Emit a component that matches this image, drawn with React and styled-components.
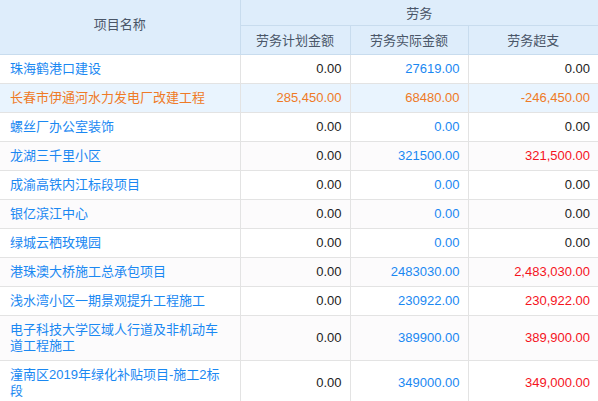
import React from "react";
import styled, { createGlobalStyle } from "styled-components";

const GlobalStyle = createGlobalStyle`
  body {
    margin: 0;
    background: #fff;
    font-family: "Liberation Sans", "Noto Sans CJK SC", sans-serif;
  }
`;

const Table = styled.table`
  width: 598px;
  border-collapse: collapse;
  table-layout: fixed;
  font-size: 13px;
`;

const Th = styled.th`
  background: #deedfb;
  color: #4a5668;
  font-weight: normal;
  text-align: center;
  border: 1px solid #c8dcee;
  border-top: none;
  height: ${(p) => p.h}px;
  padding: 0 0 ${(p) => p.lift || 0}px;
  box-sizing: border-box;
  &:first-child {
    border-left: none;
  }
  &:last-child {
    border-right: none;
  }
`;

const Row = styled.tr`
  background: ${(p) => (p.active ? "#e9f4fe" : p.odd ? "#fcfbfc" : "#ffffff")};
`;

const Td = styled.td`
  border: 1px solid #e3e3e3;
  border-top: none;
  padding: ${(p) => (p.num ? "6px 8px 6px 10px" : "6px 11px 6px 10px")};
  line-height: 16px;
  text-align: ${(p) => (p.num ? "right" : "left")};
  color: ${(p) => p.color};
  vertical-align: middle;
  word-break: break-all;
  &:first-child {
    border-left: none;
  }
  &:last-child {
    border-right: none;
  }
`;

const BLUE = "#1a88f2";
const BLACK = "#222";
const RED = "#f5141e";
const ORANGE = "#ef7a26";

const rows = [
  ["珠海鹤港口建设", "0.00", "27619.00", "0.00"],
  ["长春市伊通河水力发电厂改建工程", "285,450.00", "68480.00", "-246,450.00", true],
  ["螺丝厂办公室装饰", "0.00", "0.00", "0.00"],
  ["龙湖三千里小区", "0.00", "321500.00", "321,500.00"],
  ["成渝高铁内江标段项目", "0.00", "0.00", "0.00"],
  ["银亿滨江中心", "0.00", "0.00", "0.00"],
  ["绿城云栖玫瑰园", "0.00", "0.00", "0.00"],
  ["港珠澳大桥施工总承包项目", "0.00", "2483030.00", "2,483,030.00"],
  ["浅水湾小区一期景观提升工程施工", "0.00", "230922.00", "230,922.00"],
  ["电子科技大学区域人行道及非机动车道工程施工", "0.00", "389900.00", "389,900.00"],
  ["潼南区2019年绿化补贴项目-施工2标段", "0.00", "349000.00", "349,000.00"],
];

export default function App() {
  return (
    <>
      <GlobalStyle />
      <Table>
        <colgroup>
          <col style={{ width: 240 }} />
          <col style={{ width: 110 }} />
          <col style={{ width: 118 }} />
          <col style={{ width: 130 }} />
        </colgroup>
        <thead>
          <tr>
            <Th rowSpan={2} h={25} lift={6}>项目名称</Th>
            <Th colSpan={3} h={25}>劳务</Th>
          </tr>
          <tr>
            <Th h={29}>劳务计划金额</Th>
            <Th h={29}>劳务实际金额</Th>
            <Th h={29}>劳务超支</Th>
          </tr>
        </thead>
        <tbody>
          {rows.map(([name, plan, actual, over, active], i) => (
            <Row key={name} active={active} odd={i % 2 === 1}>
              <Td color={active ? ORANGE : BLUE}>{name}</Td>
              <Td num color={active ? ORANGE : BLACK}>{plan}</Td>
              <Td num color={active ? ORANGE : BLUE}>{actual}</Td>
              <Td num color={active ? ORANGE : over === "0.00" ? BLACK : RED}>{over}</Td>
            </Row>
          ))}
        </tbody>
      </Table>
    </>
  );
}
